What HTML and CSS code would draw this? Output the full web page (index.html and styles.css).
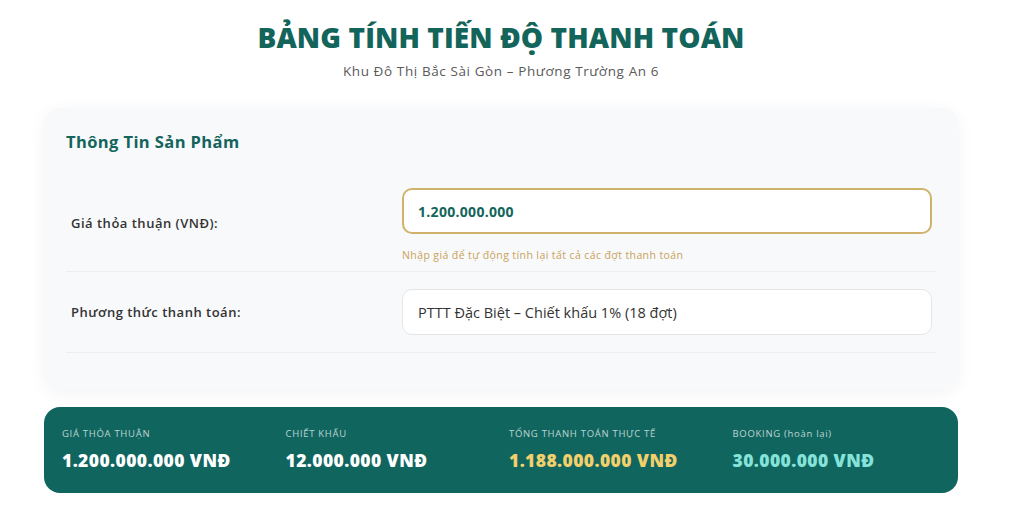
FILE: index.html
```html
<!DOCTYPE html>
<html lang="vi">
<head>
    <meta charset="UTF-8">
    <meta name="viewport" content="width=device-width, initial-scale=1.0">
    <title>Bảng Tính Tiến Độ Thanh Toán</title>
    <link rel="stylesheet" href="styles.css">
</head>
<body>
    <div class="page">
        <header class="page-header">
            <h1>BẢNG TÍNH TIẾN ĐỘ THANH TOÁN</h1>
            <p>Khu Đô Thị Bắc Sài Gòn – Phương Trường An 6</p>
        </header>

        <section class="card">
            <h2>Thông Tin Sản Phẩm</h2>

            <div class="form-row first">
                <label for="price">Giá thỏa thuận (VNĐ):</label>
                <div class="field">
                    <input id="price" class="input input-price" type="text" value="1.200.000.000">
                    <span class="hint">Nhập giá để tự động tính lại tất cả các đợt thanh toán</span>
                </div>
            </div>

            <div class="form-row">
                <label for="method">Phương thức thanh toán:</label>
                <div class="field">
                    <div id="method" class="input input-select">PTTT Đặc Biệt – Chiết khấu 1% (18 đợt)</div>
                </div>
            </div>
        </section>

        <section class="summary">
            <div class="summary-item">
                <span class="summary-label">Giá thỏa thuận</span>
                <span class="summary-value">1.200.000.000 VNĐ</span>
            </div>
            <div class="summary-item">
                <span class="summary-label">Chiết khấu</span>
                <span class="summary-value">12.000.000 VNĐ</span>
            </div>
            <div class="summary-item">
                <span class="summary-label">Tổng thanh toán thực tế</span>
                <span class="summary-value gold">1.188.000.000 VNĐ</span>
            </div>
            <div class="summary-item">
                <span class="summary-label">BOOKING <span class="lower">(hoàn lại)</span></span>
                <span class="summary-value aqua">30.000.000 VNĐ</span>
            </div>
        </section>
    </div>
</body>
</html>
```

FILE: styles.css
```css
body {
    font-family: 'Open Sans', 'Noto Sans', sans-serif;
    margin: 0;
    padding: 0;
    background: #fff;
    color: #333;
}

.page {
    width: 914px;
    margin: 0 0 0 44px;
}

.page-header {
    text-align: center;
    padding-top: 18px;
}

.page-header h1 {
    margin: 0;
    font-size: 28px;
    font-weight: 800;
    color: #13645b;
    letter-spacing: 0.1px;
    line-height: 38px;
}

.page-header p {
    margin: 6px 0 0;
    font-size: 13.5px;
    letter-spacing: 0.6px;
    color: #5a5a5a;
}

.card {
    margin-top: 28px;
    background: #f8f9fb;
    border-radius: 16px;
    box-shadow: 0 4px 18px rgba(0, 0, 0, 0.05);
    padding: 22px 22px 36px;
}

.card h2 {
    margin: 0 0 34px;
    font-size: 16.5px;
    font-weight: 700;
    letter-spacing: 0.4px;
    color: #13645b;
    line-height: 24px;
}

.form-row {
    display: flex;
    align-items: center;
    border-bottom: 1px solid #eceef1;
    padding: 17px 4px 17px 5px;
}

.form-row.first {
    padding-top: 0;
    padding-bottom: 9px;
}

.form-row label {
    width: 331px;
    font-size: 13px;
    font-weight: 600;
    letter-spacing: 0.5px;
    color: #333;
}

.form-row.first label {
    margin-bottom: 4px;
}

.field {
    flex: 1;
    display: flex;
    flex-direction: column;
}

.input {
    box-sizing: border-box;
    height: 46px;
    width: 100%;
    padding: 0 14px;
    border-radius: 10px;
    background: #fff;
    font-family: inherit;
    font-size: 14px;
    display: flex;
    align-items: center;
}

.input-price {
    border: 2px solid #cfb36a;
    font-weight: 700;
    letter-spacing: 0.3px;
    color: #13645b;
    outline: none;
}

.input-select {
    border: 1px solid #e3e5e8;
    color: #333;
    padding-left: 15px;
    font-size: 14.5px;
}

.hint {
    margin-top: 14px;
    font-size: 10.5px;
    letter-spacing: 0.4px;
    color: #c9a25a;
}

.summary {
    margin-top: 18px;
    background: #10665f;
    border-radius: 16px;
    padding: 20px 18px 22px;
    display: grid;
    grid-template-columns: repeat(4, 1fr);
    column-gap: 16px;
}

.summary-item {
    display: flex;
    flex-direction: column;
}

.summary-label {
    font-size: 9.5px;
    text-transform: uppercase;
    letter-spacing: 0.7px;
    color: rgba(255, 255, 255, 0.72);
    line-height: 14px;
}

.summary-label .lower {
    text-transform: none;
}

.summary-value {
    margin-top: 8px;
    font-size: 17.5px;
    font-weight: 800;
    letter-spacing: 0.4px;
    color: #fff;
    line-height: 22px;
}

.summary-value.gold {
    color: #f2d06b;
}

.summary-value.aqua {
    color: #86e3da;
}
```
